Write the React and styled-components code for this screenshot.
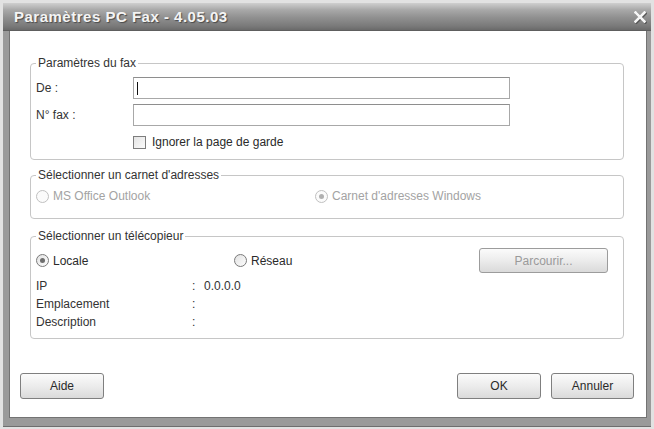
import React from "react";
import styled, { createGlobalStyle } from "styled-components";

const GlobalStyle = createGlobalStyle`
  html, body {
    margin: 0;
    padding: 0;
    background: #e2e2e2;
  }
  body {
    font-family: "Liberation Sans", Arial, sans-serif;
    font-size: 12px;
    color: #2a2a2a;
  }
`;

const Window = styled.div`
  margin: 3px 0 0 3px;
  width: 648px;
  height: 424px;
  display: flex;
  flex-direction: column;
  background: #9a9a9a;
  box-sizing: border-box;
  border-bottom: 1px solid #6e6e6e;
`;

const TitleBar = styled.div`
  height: 28px;
  flex: none;
  display: flex;
  align-items: center;
  justify-content: space-between;
  padding: 0 5px 0 11px;
  box-sizing: border-box;
  background: linear-gradient(#cfcfcf 0%, #a9a9a9 25%, #8f8f8f 55%, #7a7a7a 85%, #6a6a6a 100%);
  border-bottom: 1px solid #5e5e5e;
`;

const Title = styled.div`
  font-family: "Liberation Sans", Arial, sans-serif;
  font-weight: bold;
  font-size: 15px;
  letter-spacing: 0.5px;
  color: #f4f4f4;
  text-shadow: 1px 1px 1px #4a4a4a;
`;

const CloseButton = styled.div`
  width: 12px;
  height: 12px;
  display: flex;
  margin-top: 1px;
  svg {
    filter: drop-shadow(1px 1px 0 #555);
  }
`;

const Frame = styled.div`
  flex: 1;
  display: flex;
  padding: 0 4px 8px 6px;
  min-height: 0;
`;

const Content = styled.div`
  flex: 1;
  background: #fff;
  border: 1px solid #737373;
  border-top: none;
  display: flex;
  flex-direction: column;
  padding: 25px 22px 18px 20px;
`;

const Group = styled.fieldset`
  margin: ${(p) => p.$gap || 0}px 0 0 0;
  padding: ${(p) => p.$pt}px 5px ${(p) => p.$pb}px 5px;
  border: 1px solid #c6c6c6;
  border-radius: 4px;
  min-width: 0;
`;

const Legend = styled.legend`
  padding: 0 2px;
  font-size: 12px;
  line-height: 14px;
  color: #333;
`;

const FieldRow = styled.div`
  display: flex;
  align-items: center;
  height: ${(p) => p.$h || 22}px;
  margin-top: ${(p) => p.$mt || 0}px;
`;

const Label = styled.div`
  width: 97px;
  flex: none;
  color: #333;
`;

const TextBox = styled.div`
  position: relative;
  width: 377px;
  height: 22px;
  box-sizing: border-box;
  border: 1px solid #a8a8a8;
  border-top-color: #8e8e8e;
  background: #fff;
  &::before {
    content: "";
    display: ${(p) => (p.$caret ? "block" : "none")};
    position: absolute;
    left: 3px;
    top: 4px;
    width: 1px;
    height: 13px;
    background: #111;
  }
`;

const CheckBox = styled.span`
  width: 13px;
  height: 13px;
  box-sizing: border-box;
  border: 1px solid #7d7d7d;
  background: linear-gradient(135deg, #e4e4e4, #fbfbfb);
  margin-right: 6px;
  flex: none;
`;

const ChoiceRow = styled.div`
  display: grid;
  grid-template-columns: ${(p) => p.$cols};
  align-items: center;
  height: ${(p) => p.$h}px;
  margin-top: ${(p) => p.$mt || 0}px;
`;

const Choice = styled.label`
  display: flex;
  align-items: center;
  color: ${(p) => (p.$disabled ? "#a3a3a3" : "#2a2a2a")};
`;

const Radio = styled.span`
  position: relative;
  width: 13px;
  height: 13px;
  box-sizing: border-box;
  border-radius: 50%;
  border: 1px solid ${(p) => (p.$disabled ? "#c0c0c0" : "#7a7a7a")};
  background: ${(p) => (p.$disabled ? "#fbfbfb" : "linear-gradient(135deg, #e2e2e2, #fdfdfd)")};
  margin-right: 4px;
  flex: none;
  &::after {
    content: "";
    display: ${(p) => (p.$checked ? "block" : "none")};
    position: absolute;
    left: 3px;
    top: 3px;
    width: 5px;
    height: 5px;
    border-radius: 50%;
    background: ${(p) => (p.$disabled ? "#b0b0b0" : "#6e6e6e")};
  }
`;

const Button = styled.button`
  width: ${(p) => p.$w || 84}px;
  height: ${(p) => p.$h || 26}px;
  box-sizing: border-box;
  border: 1px solid ${(p) => (p.disabled ? "#9c9c9c" : "#7f7f7f")};
  border-radius: 3px;
  background: linear-gradient(#fbfbfb, #ececec 50%, #dadada);
  font-family: "Liberation Sans", Arial, sans-serif;
  font-size: 12px;
  color: ${(p) => (p.disabled ? "#9a9a9a" : "#2a2a2a")};
  padding: 0;
`;

const InfoList = styled.div`
  margin-top: 4px;
`;

const InfoRow = styled.div`
  display: grid;
  grid-template-columns: 156px 12px 1fr;
  height: 18px;
  align-items: center;
  color: #333;
`;

const ButtonBar = styled.div`
  margin-top: auto;
  display: flex;
  gap: 10px;
  margin-left: -10px;
  margin-right: -10px;
  & > :first-child {
    margin-right: auto;
  }
`;

export default function App() {
  return (
    <>
      <GlobalStyle />
      <Window>
        <TitleBar>
          <Title>Paramètres PC Fax - 4.05.03</Title>
          <CloseButton>
            <svg width="12" height="12" viewBox="0 0 12 12">
              <path d="M1.5 1.5 L10.5 10.5 M10.5 1.5 L1.5 10.5" stroke="#f6f6f6" strokeWidth="2.6" strokeLinecap="square" />
            </svg>
          </CloseButton>
        </TitleBar>
        <Frame>
          <Content>
            <Group $pt={7} $pb={8}>
              <Legend>Paramètres du fax</Legend>
              <FieldRow>
                <Label>De :</Label>
                <TextBox $caret />
              </FieldRow>
              <FieldRow $mt={5}>
                <Label>N° fax :</Label>
                <TextBox />
              </FieldRow>
              <FieldRow $mt={7} $h={18}>
                <Label />
                <CheckBox />
                <span>Ignorer la page de garde</span>
              </FieldRow>
            </Group>

            <Group $gap={8} $pt={5} $pb={13}>
              <Legend>Sélectionner un carnet d'adresses</Legend>
              <ChoiceRow $cols="279px 1fr" $h={18}>
                <Choice $disabled>
                  <Radio $disabled />
                  MS Office Outlook
                </Choice>
                <Choice $disabled>
                  <Radio $disabled $checked />
                  Carnet d'adresses Windows
                </Choice>
              </ChoiceRow>
            </Group>

            <Group $gap={10} $pt={5} $pb={7}>
              <Legend>Sélectionner un télécopieur</Legend>
              <ChoiceRow $cols="198px 1fr 129px 10px" $h={25}>
                <Choice>
                  <Radio $checked />
                  Locale
                </Choice>
                <Choice>
                  <Radio />
                  Réseau
                </Choice>
                <Button disabled $w={129} $h={25}>
                  Parcourir...
                </Button>
              </ChoiceRow>
              <InfoList>
                <InfoRow>
                  <span>IP</span>
                  <span>:</span>
                  <span>0.0.0.0</span>
                </InfoRow>
                <InfoRow>
                  <span>Emplacement</span>
                  <span>:</span>
                  <span />
                </InfoRow>
                <InfoRow>
                  <span>Description</span>
                  <span>:</span>
                  <span />
                </InfoRow>
              </InfoList>
            </Group>

            <ButtonBar>
              <Button>Aide</Button>
              <Button>OK</Button>
              <Button $w={83}>Annuler</Button>
            </ButtonBar>
          </Content>
        </Frame>
      </Window>
    </>
  );
}
